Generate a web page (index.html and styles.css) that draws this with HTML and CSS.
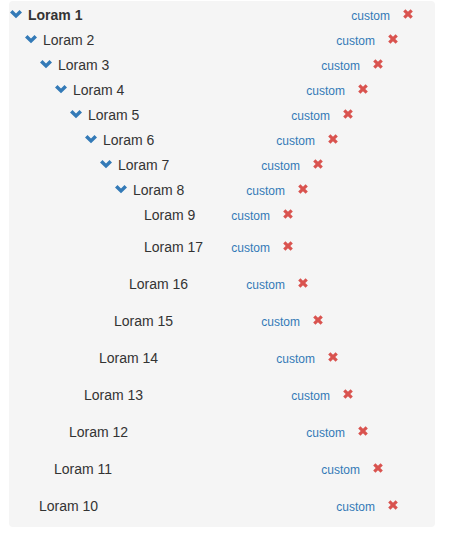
FILE: index.html
```html
<!DOCTYPE html>
<html>
<head>
<meta charset="utf-8">
<link rel="stylesheet" href="styles.css">
</head>
<body>
<div class="panel">
  <ul class="tree">
    <li>
      <div class="row"><svg class="chev" viewBox="0 0 12 8"><polygon points="0,2.5 2.5,0 6,3.5 9.5,0 12,2.5 6,8.3"/></svg><span class="label bold">Loram 1</span><a class="custom">custom</a><svg class="del" viewBox="0 0 10 10"><line x1="1.3" y1="1.3" x2="8.7" y2="8.7"/><line x1="8.7" y1="1.3" x2="1.3" y2="8.7"/></svg></div>
      <ul class="children">
        <li>
          <div class="row"><svg class="chev" viewBox="0 0 12 8"><polygon points="0,2.5 2.5,0 6,3.5 9.5,0 12,2.5 6,8.3"/></svg><span class="label">Loram 2</span><a class="custom">custom</a><svg class="del" viewBox="0 0 10 10"><line x1="1.3" y1="1.3" x2="8.7" y2="8.7"/><line x1="8.7" y1="1.3" x2="1.3" y2="8.7"/></svg></div>
          <ul class="children">
            <li>
              <div class="row"><svg class="chev" viewBox="0 0 12 8"><polygon points="0,2.5 2.5,0 6,3.5 9.5,0 12,2.5 6,8.3"/></svg><span class="label">Loram 3</span><a class="custom">custom</a><svg class="del" viewBox="0 0 10 10"><line x1="1.3" y1="1.3" x2="8.7" y2="8.7"/><line x1="8.7" y1="1.3" x2="1.3" y2="8.7"/></svg></div>
              <ul class="children">
                <li>
                  <div class="row"><svg class="chev" viewBox="0 0 12 8"><polygon points="0,2.5 2.5,0 6,3.5 9.5,0 12,2.5 6,8.3"/></svg><span class="label">Loram 4</span><a class="custom">custom</a><svg class="del" viewBox="0 0 10 10"><line x1="1.3" y1="1.3" x2="8.7" y2="8.7"/><line x1="8.7" y1="1.3" x2="1.3" y2="8.7"/></svg></div>
                  <ul class="children">
                    <li>
                      <div class="row"><svg class="chev" viewBox="0 0 12 8"><polygon points="0,2.5 2.5,0 6,3.5 9.5,0 12,2.5 6,8.3"/></svg><span class="label">Loram 5</span><a class="custom">custom</a><svg class="del" viewBox="0 0 10 10"><line x1="1.3" y1="1.3" x2="8.7" y2="8.7"/><line x1="8.7" y1="1.3" x2="1.3" y2="8.7"/></svg></div>
                      <ul class="children">
                        <li>
                          <div class="row"><svg class="chev" viewBox="0 0 12 8"><polygon points="0,2.5 2.5,0 6,3.5 9.5,0 12,2.5 6,8.3"/></svg><span class="label">Loram 6</span><a class="custom">custom</a><svg class="del" viewBox="0 0 10 10"><line x1="1.3" y1="1.3" x2="8.7" y2="8.7"/><line x1="8.7" y1="1.3" x2="1.3" y2="8.7"/></svg></div>
                          <ul class="children">
                            <li>
                              <div class="row"><svg class="chev" viewBox="0 0 12 8"><polygon points="0,2.5 2.5,0 6,3.5 9.5,0 12,2.5 6,8.3"/></svg><span class="label">Loram 7</span><a class="custom">custom</a><svg class="del" viewBox="0 0 10 10"><line x1="1.3" y1="1.3" x2="8.7" y2="8.7"/><line x1="8.7" y1="1.3" x2="1.3" y2="8.7"/></svg></div>
                              <ul class="children">
                                <li>
                                  <div class="row"><svg class="chev" viewBox="0 0 12 8"><polygon points="0,2.5 2.5,0 6,3.5 9.5,0 12,2.5 6,8.3"/></svg><span class="label">Loram 8</span><a class="custom">custom</a><svg class="del" viewBox="0 0 10 10"><line x1="1.3" y1="1.3" x2="8.7" y2="8.7"/><line x1="8.7" y1="1.3" x2="1.3" y2="8.7"/></svg></div>
                                  <ul class="children">
                                    <li><div class="row leaf"><span class="label">Loram 9</span><a class="custom">custom</a><svg class="del" viewBox="0 0 10 10"><line x1="1.3" y1="1.3" x2="8.7" y2="8.7"/><line x1="8.7" y1="1.3" x2="1.3" y2="8.7"/></svg></div></li>
                                    <li><div class="row leaf"><span class="label">Loram 17</span><a class="custom">custom</a><svg class="del" viewBox="0 0 10 10"><line x1="1.3" y1="1.3" x2="8.7" y2="8.7"/><line x1="8.7" y1="1.3" x2="1.3" y2="8.7"/></svg></div></li>
                                  </ul>
                                </li>
                                <li><div class="row leaf"><span class="label">Loram 16</span><a class="custom">custom</a><svg class="del" viewBox="0 0 10 10"><line x1="1.3" y1="1.3" x2="8.7" y2="8.7"/><line x1="8.7" y1="1.3" x2="1.3" y2="8.7"/></svg></div></li>
                              </ul>
                            </li>
                            <li><div class="row leaf"><span class="label">Loram 15</span><a class="custom">custom</a><svg class="del" viewBox="0 0 10 10"><line x1="1.3" y1="1.3" x2="8.7" y2="8.7"/><line x1="8.7" y1="1.3" x2="1.3" y2="8.7"/></svg></div></li>
                          </ul>
                        </li>
                        <li><div class="row leaf"><span class="label">Loram 14</span><a class="custom">custom</a><svg class="del" viewBox="0 0 10 10"><line x1="1.3" y1="1.3" x2="8.7" y2="8.7"/><line x1="8.7" y1="1.3" x2="1.3" y2="8.7"/></svg></div></li>
                      </ul>
                    </li>
                    <li><div class="row leaf"><span class="label">Loram 13</span><a class="custom">custom</a><svg class="del" viewBox="0 0 10 10"><line x1="1.3" y1="1.3" x2="8.7" y2="8.7"/><line x1="8.7" y1="1.3" x2="1.3" y2="8.7"/></svg></div></li>
                  </ul>
                </li>
                <li><div class="row leaf"><span class="label">Loram 12</span><a class="custom">custom</a><svg class="del" viewBox="0 0 10 10"><line x1="1.3" y1="1.3" x2="8.7" y2="8.7"/><line x1="8.7" y1="1.3" x2="1.3" y2="8.7"/></svg></div></li>
              </ul>
            </li>
            <li><div class="row leaf"><span class="label">Loram 11</span><a class="custom">custom</a><svg class="del" viewBox="0 0 10 10"><line x1="1.3" y1="1.3" x2="8.7" y2="8.7"/><line x1="8.7" y1="1.3" x2="1.3" y2="8.7"/></svg></div></li>
          </ul>
        </li>
        <li><div class="row leaf"><span class="label">Loram 10</span><a class="custom">custom</a><svg class="del" viewBox="0 0 10 10"><line x1="1.3" y1="1.3" x2="8.7" y2="8.7"/><line x1="8.7" y1="1.3" x2="1.3" y2="8.7"/></svg></div></li>
      </ul>
    </li>
  </ul>
</div>
</body>
</html>
```

FILE: styles.css
```css
html, body {
  margin: 0;
  padding: 0;
  background: #ffffff;
}

body {
  font-family: "Liberation Sans", Arial, sans-serif;
  font-size: 14px;
  color: #333333;
}

.panel {
  margin: 1px 0 0 9px;
  width: 426px;
  box-sizing: border-box;
  padding: 2px 22px 1px 1px;
  background: #f5f5f5;
  border-radius: 4px;
}

.tree,
.children {
  list-style: none;
  margin: 0;
}

.tree {
  padding: 0;
}

.children {
  padding: 0 15px 5px 15px;
}

.tree > li > .children {
  padding-bottom: 0;
}

.row {
  display: flex;
  align-items: baseline;
  height: 25px;
  line-height: 25px;
}

.row.leaf {
  margin-bottom: 7px;
}

.chev {
  align-self: flex-start;
  flex: none;
  width: 12px;
  height: 8px;
  margin-top: 7px;
  margin-right: 6px;
  overflow: visible;
  fill: #337ab7;
}

.label {
  flex: 1;
  white-space: nowrap;
}

.leaf .label {
  padding-left: 14px;
}

.bold {
  font-weight: bold;
}

.custom {
  font-size: 12px;
  color: #337ab7;
  margin-right: 13px;
  cursor: pointer;
}

.del {
  align-self: flex-start;
  flex: none;
  width: 10px;
  height: 10px;
  margin-top: 6px;
  overflow: visible;
  stroke: #d9534f;
  stroke-width: 3.2;
  stroke-linecap: butt;
}
```
